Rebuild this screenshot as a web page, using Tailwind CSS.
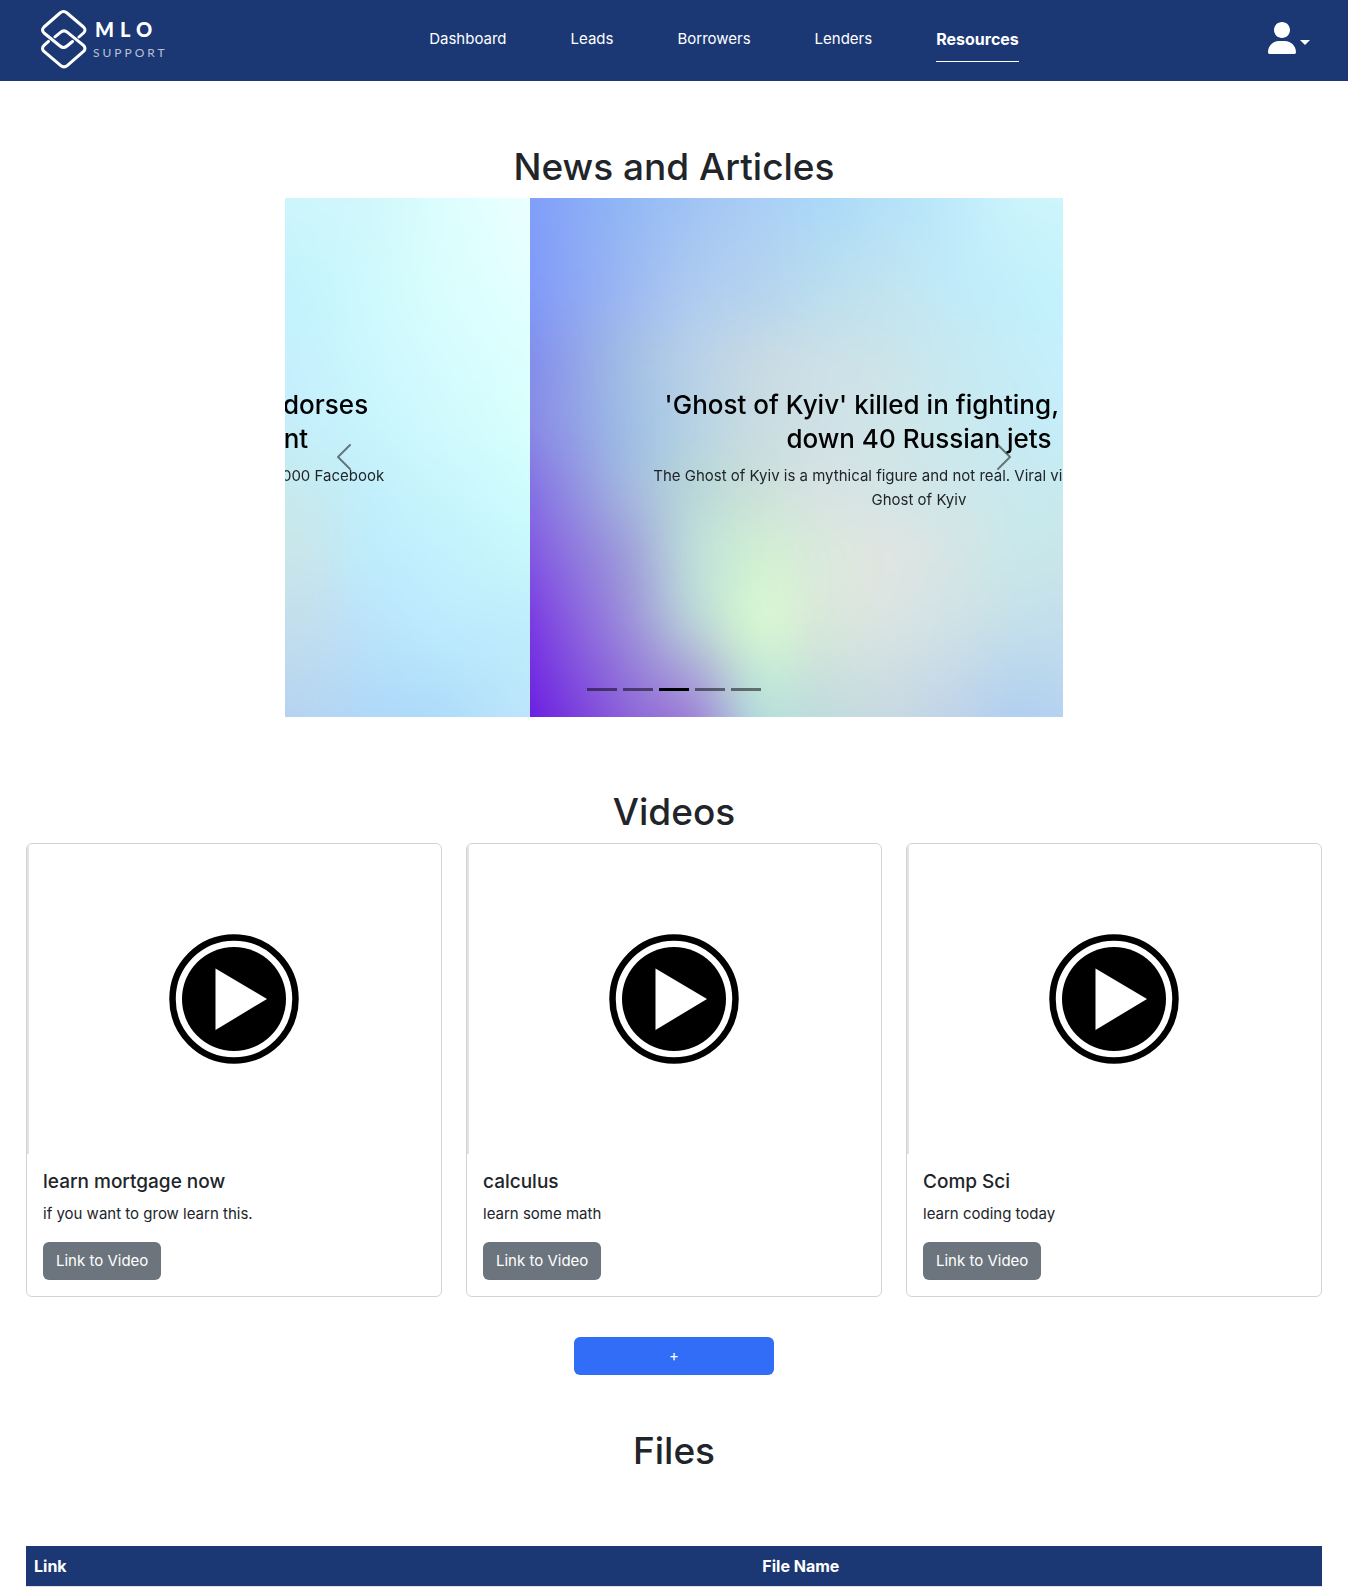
<!DOCTYPE html>
<html lang="en">
<head>
<meta charset="utf-8">
<meta name="viewport" content="width=device-width, initial-scale=1">
<title>MLO Support - Resources</title>
<script src="https://cdn.jsdelivr.net/npm/@tailwindcss/browser@4"></script>
</head>
<body class="bg-white font-[Inter,sans-serif] text-[15px] text-[#212529]">

<header class="flex h-[81px] items-center justify-between bg-[#1b3875] pr-[38px] pl-10 text-white">
  <a href="#" class="flex w-[140px] items-center gap-[5px] pb-[3px]" aria-label="MLO Support">
    <svg class="h-[60px] w-12 shrink-0" viewBox="0 0 48 60" fill="none" stroke="#fff" stroke-width="3" stroke-linecap="round" stroke-linejoin="round" aria-hidden="true">
      <path id="link-shape" d="M39 28 L43.500 24 Q46.500 21 43.500 18 L27 4 Q23.500 1 20 4 L4 18 Q1 21 4 24 L20 37 Q23.500 40 27 37 L32.500 32.500"/>
      <use href="#link-shape" transform="rotate(180 23.750 30.200)"/>
    </svg>
    <span class="flex flex-col gap-2 font-[Lato,sans-serif]">
      <span class="pl-0.5 text-xl leading-5 font-black tracking-[6px]">MLO</span>
      <span class="text-xs leading-3 tracking-[3px] text-white/70">SUPPORT</span>
    </span>
  </a>
  <nav class="flex gap-16 pb-0.5">
    <a href="#" class="py-2.5 leading-6">Dashboard</a>
    <a href="#" class="py-2.5 leading-6">Leads</a>
    <a href="#" class="py-2.5 leading-6">Borrowers</a>
    <a href="#" class="py-2.5 leading-6">Lenders</a>
    <a href="#" class="border-b border-white py-2.5 text-base leading-6 font-bold" aria-current="page">Resources</a>
  </nav>
  <button type="button" class="flex items-center gap-1 pb-1.5" aria-label="Account menu">
    <svg class="h-8 w-7" viewBox="0 0 448 512" fill="currentColor" aria-hidden="true"><path d="M224 256c70.700 0 128-57.300 128-128S294.700 0 224 0S96 57.300 96 128s57.300 128 128 128zm-45.700 48C79.800 304 0 383.800 0 482.300C0 498.700 13.300 512 29.700 512H418.300c16.400 0 29.700-13.300 29.700-29.700C448 383.800 368.200 304 269.700 304H178.300z"/></svg>
    <svg class="mt-2.5 h-[5px] w-2.5" viewBox="0 0 10 5" fill="currentColor" aria-hidden="true"><path d="M0 0H10L5 5z"/></svg>
  </button>
</header>

<main class="px-[26px]">
  <h1 class="mt-[62px] mb-[7px] text-center text-[37px] leading-12 font-medium">News and Articles</h1>

  <section class="relative mx-auto aspect-[778/519] w-3/5 overflow-hidden" aria-label="News">
    <article class="absolute inset-y-0 right-[68.500%] w-full">
      <canvas class="slide-art block h-full w-full"></canvas>
      <div class="absolute top-[190px] right-0 flex w-[70%] flex-col items-end">
        <h3 class="flex flex-col items-end text-[26px] leading-[34px] font-medium text-black">
          <span class="pr-[162px]">endorses</span>
          <span class="pr-[222px]">nt</span>
        </h3>
        <p class="mt-2 pr-[146px] leading-6">25,000 Facebook</p>
      </div>
    </article>
    <article class="absolute inset-y-0 left-[31.500%] w-full">
      <canvas class="slide-art block h-full w-full"></canvas>
      <div class="absolute inset-x-[15%] top-[190px] text-center">
        <h3 class="text-[26px] leading-[34px] font-medium whitespace-nowrap text-black">'Ghost of Kyiv' killed in fighting, had shot<br>down 40 Russian jets</h3>
        <p class="mt-2 leading-6 whitespace-nowrap">The Ghost of Kyiv is a mythical figure and not real. Viral video shows of the<br>Ghost of Kyiv</p>
      </div>
    </article>
    <button type="button" class="absolute inset-y-0 left-0 flex w-[15%] items-center justify-center text-black opacity-50" aria-label="Previous">
      <svg class="size-8" viewBox="0 0 16 16" fill="currentColor"><path d="M11.354 1.646a.5.5 0 0 1 0 .708L5.707 8l5.647 5.646a.5.5 0 0 1-.708.708l-6-6a.5.5 0 0 1 0-.708l6-6a.5.5 0 0 1 .708 0z"/></svg>
    </button>
    <button type="button" class="absolute inset-y-0 right-0 flex w-[15%] items-center justify-center text-black opacity-50" aria-label="Next">
      <svg class="size-8" viewBox="0 0 16 16" fill="currentColor"><path d="M4.646 1.646a.5.5 0 0 1 .708 0l6 6a.5.5 0 0 1 0 .708l-6 6a.5.5 0 0 1-.708-.708L10.293 8 4.646 2.354a.5.5 0 0 1 0-.708z"/></svg>
    </button>
    <div class="absolute inset-x-0 bottom-[26px] flex justify-center gap-1.5">
      <button type="button" class="h-[3px] w-[30px] bg-black/50" aria-label="Slide 1"></button>
      <button type="button" class="h-[3px] w-[30px] bg-black/50" aria-label="Slide 2"></button>
      <button type="button" class="h-[3px] w-[30px] bg-black" aria-label="Slide 3"></button>
      <button type="button" class="h-[3px] w-[30px] bg-black/50" aria-label="Slide 4"></button>
      <button type="button" class="h-[3px] w-[30px] bg-black/50" aria-label="Slide 5"></button>
    </div>
  </section>

  <h1 class="mt-[71px] mb-[7px] text-center text-[37px] leading-12 font-medium">Videos</h1>

  <section class="grid grid-cols-3 gap-6" aria-label="Videos">
    <article class="overflow-hidden rounded-md border border-[#d3d3d4]">
      <div class="flex h-[310px] items-center justify-center border-l-2 border-[#e2e2e2] pr-0.5">
        <svg class="size-[132px]" viewBox="0 0 132 132" role="img" aria-label="Play"><circle cx="66" cy="66" r="61.500" fill="none" stroke="#000" stroke-width="6.500"/><circle cx="66" cy="66" r="52" fill="#000"/><path d="M47.500 35.500V97L99 66z" fill="#fff"/></svg>
      </div>
      <div class="p-4">
        <h5 class="mb-2 text-[19px] leading-6 font-medium">learn mortgage now</h5>
        <p class="mb-4 leading-6">if you want to grow learn this.</p>
        <a href="#" class="inline-block rounded-md bg-[#6c757d] px-[13px] py-[7px] align-top leading-6 text-white">Link to Video</a>
      </div>
    </article>
    <article class="overflow-hidden rounded-md border border-[#d3d3d4]">
      <div class="flex h-[310px] items-center justify-center border-l-2 border-[#e2e2e2] pr-0.5">
        <svg class="size-[132px]" viewBox="0 0 132 132" role="img" aria-label="Play"><circle cx="66" cy="66" r="61.500" fill="none" stroke="#000" stroke-width="6.500"/><circle cx="66" cy="66" r="52" fill="#000"/><path d="M47.500 35.500V97L99 66z" fill="#fff"/></svg>
      </div>
      <div class="p-4">
        <h5 class="mb-2 text-[19px] leading-6 font-medium">calculus</h5>
        <p class="mb-4 leading-6">learn some math</p>
        <a href="#" class="inline-block rounded-md bg-[#6c757d] px-[13px] py-[7px] align-top leading-6 text-white">Link to Video</a>
      </div>
    </article>
    <article class="overflow-hidden rounded-md border border-[#d3d3d4]">
      <div class="flex h-[310px] items-center justify-center border-l-2 border-[#e2e2e2] pr-0.5">
        <svg class="size-[132px]" viewBox="0 0 132 132" role="img" aria-label="Play"><circle cx="66" cy="66" r="61.500" fill="none" stroke="#000" stroke-width="6.500"/><circle cx="66" cy="66" r="52" fill="#000"/><path d="M47.500 35.500V97L99 66z" fill="#fff"/></svg>
      </div>
      <div class="p-4">
        <h5 class="mb-2 text-[19px] leading-6 font-medium">Comp Sci</h5>
        <p class="mb-4 leading-6">learn coding today</p>
        <a href="#" class="inline-block rounded-md bg-[#6c757d] px-[13px] py-[7px] align-top leading-6 text-white">Link to Video</a>
      </div>
    </article>
  </section>

  <div class="mt-10 flex justify-center">
    <button type="button" class="w-[200px] rounded-md bg-[#316df6] py-[7px] leading-6 text-white" aria-label="Add video">+</button>
  </div>

  <h1 class="mt-[52px] text-center text-[37px] leading-12 font-medium">Files</h1>

  <table class="mt-[71px] mb-[3px] w-full table-fixed border-collapse border-b border-[#dee2e6] text-left text-base">
    <thead class="bg-[#1b3875] text-white">
      <tr>
        <th scope="col" class="w-[56.200%] p-2 leading-6 font-bold">Link</th>
        <th scope="col" class="p-2 leading-6 font-bold">File Name</th>
      </tr>
    </thead>
  </table>
</main>

<script>
  // Colour grid for the slide background, interpolated with a Catmull-Rom spline.
  const grid = [
    '88a6f7 96b8f4 a5c6f3 aed0f3 b1daf5 b9e2f6 bfeafa c8f2fb cbf5fc d0f8fc dafdfd e4ffff',
    '8aa4f5 9db9f1 aecbf0 b6d4ee bcdeee c2e4f0 c1eaf8 c2effb c5f4fd cef9fd d8fdfd e0ffff',
    '8e9eea a3bde6 b8d0e8 c6dae5 cbe0e8 cbe4ea c7e9f1 c5edf8 c6f1fd ccf7fd d4fbfe dafefe',
    '909ae6 9fbde5 b6d2e4 c8dce2 cfe1e6 cfe5e9 cae9ee c6ebf4 c5effb c8f4fd cff9fd d5fdfd',
    '8f88e2 a3b6df b9d6da cbe1da d6e3e2 d4e5e6 cfe7ea c9e9ee c6ebf0 c3effb c8f5fc cdfafd',
    '8c70e0 9fa0da bddbda d0eed4 d9e9dc dee5e2 d5e5e5 c9e7ea c8e6ec bfecfb c2f0fd c6f5fc',
    '8658e0 9c8fdb b9d0d8 d4f4d2 d8e8da d9e4e2 d0e2e6 c5e0ea c3dfee bce4fa bdebfd bfedfc',
    '7c42df 9272da a89fd8 bfe2d8 c8e0dc cddde2 c5d9e8 b9d5ee bad8f0 b4dcf9 b3e1fb bae6fb'
  ].map(r => r.split(' ').map(v => [0, 2, 4].map(i => parseInt(v.slice(i, i + 2), 16))));

  function spline(p, t) {
    const n = p.length;
    const i = Math.max(0, Math.min(n - 2, Math.floor(t)));
    const f = t - i, b = p[i], c = p[i + 1];
    if (f < 0 || f > 1) return b + (c - b) * f;
    const a = i > 0 ? p[i - 1] : 2 * b - c;
    const d = i < n - 2 ? p[i + 2] : 2 * c - b;
    return b + 0.5 * f * (c - a + f * (2 * a - 5 * b + 4 * c - d + f * (3 * (b - c) + d - a)));
  }

  const W = 240, H = 160;
  const image = new ImageData(W, H);
  for (let x = 0; x < W; x++) {
    const tx = (x + 0.5) / W * grid[0].length - 0.5;
    for (let k = 0; k < 3; k++) {
      const column = grid.map(r => spline(r.map(c => c[k]), tx));
      for (let y = 0; y < H; y++) {
        image.data[(y * W + x) * 4 + k] = spline(column, (y + 0.5) / H * grid.length - 0.5);
      }
    }
    for (let y = 0; y < H; y++) image.data[(y * W + x) * 4 + 3] = 255;
  }
  document.querySelectorAll('.slide-art').forEach(c => {
    c.width = W;
    c.height = H;
    c.getContext('2d').putImageData(image, 0, 0);
  });
</script>
</body>
</html>
